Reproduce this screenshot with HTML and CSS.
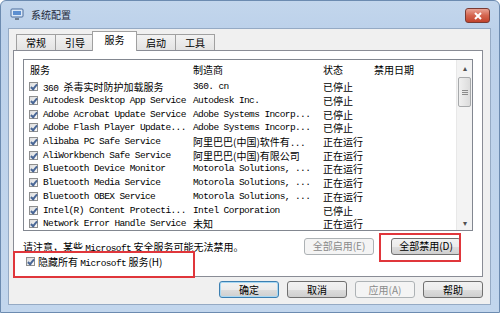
FILE: index.html
```html
<!DOCTYPE html>
<html>
<head>
    <meta charset="utf-8" />
    <title>系统配置</title>
    <link rel="stylesheet" href="styles.css">
</head>
<body>
    <div class="window">
        <div class="titlebar">
            <svg class="app-icon" width="14" height="13" viewBox="0 0 14 13">
                <rect x="1" y="1" width="12" height="8" rx="1" fill="#dbe8f7" stroke="#4b6d9c" />
                <rect x="3" y="3" width="8" height="4" fill="#5d8fd0" />
                <rect x="5" y="10" width="4" height="2" fill="#6f7f93" />
            </svg>
            <span class="title">系统配置</span>
            <div class="close">
                <svg width="10" height="8" viewBox="0 0 10 8">
                    <path d="M2 1 L8 7 M8 1 L2 7" stroke="#fff" stroke-width="2" />
                </svg>
            </div>
        </div>

        <div class="client">
            <div class="tabs">
                <div class="tab">常规</div>
                <div class="tab">引导</div>
                <div class="tab active">服务</div>
                <div class="tab">启动</div>
                <div class="tab">工具</div>
            </div>

            <div class="panel">
                <div class="listview">
                    <div class="list-body">
                        <div class="row head">
                            <span class="c-name">服务</span>
                            <span class="c-maker">制造商</span>
                            <span class="c-state">状态</span>
                            <span class="c-date">禁用日期</span>
                        </div>
                        <div class="rows">
                            <div class="row"><i class="cb"></i><span class="c-name"><b class="mono">360 </b>杀毒实时防护加载服务</span><span class="c-maker mono">360. cn</span><span class="c-state">已停止</span></div>
                            <div class="row"><i class="cb"></i><span class="c-name mono">Autodesk Desktop App Service</span><span class="c-maker mono">Autodesk Inc.</span><span class="c-state">已停止</span></div>
                            <div class="row"><i class="cb"></i><span class="c-name mono">Adobe Acrobat Update Service</span><span class="c-maker mono">Adobe Systems Incorp...</span><span class="c-state">已停止</span></div>
                            <div class="row"><i class="cb"></i><span class="c-name mono">Adobe Flash Player Update...</span><span class="c-maker mono">Adobe Systems Incorp...</span><span class="c-state">已停止</span></div>
                            <div class="row"><i class="cb"></i><span class="c-name mono">Alibaba PC Safe Service</span><span class="c-maker">阿里巴巴(中国)软件有<b class="mono">...</b></span><span class="c-state">正在运行</span></div>
                            <div class="row"><i class="cb"></i><span class="c-name mono">AliWorkbench Safe Service</span><span class="c-maker">阿里巴巴(中国)有限公司</span><span class="c-state">正在运行</span></div>
                            <div class="row"><i class="cb"></i><span class="c-name mono">Bluetooth Device Monitor</span><span class="c-maker mono">Motorola Solutions, ...</span><span class="c-state">正在运行</span></div>
                            <div class="row"><i class="cb"></i><span class="c-name mono">Bluetooth Media Service</span><span class="c-maker mono">Motorola Solutions, ...</span><span class="c-state">正在运行</span></div>
                            <div class="row"><i class="cb"></i><span class="c-name mono">Bluetooth OBEX Service</span><span class="c-maker mono">Motorola Solutions, ...</span><span class="c-state">正在运行</span></div>
                            <div class="row"><i class="cb"></i><span class="c-name mono">Intel(R) Content Protecti...</span><span class="c-maker mono">Intel Corporation</span><span class="c-state">已停止</span></div>
                            <div class="row"><i class="cb"></i><span class="c-name mono">Network Error Handle Service</span><span class="c-maker">未知</span><span class="c-state">正在运行</span></div>
                        </div>
                    </div>
                    <div class="scrollbar">
                        <div class="arrow">&#9652;</div>
                        <div class="track">
                            <div class="thumb"><span></span><span></span><span></span></div>
                        </div>
                        <div class="arrow">&#9662;</div>
                    </div>
                </div>

                <div class="note-row">
                    <span class="note">请注意，某些 <b class="mono">Microsoft</b> 安全服务可能无法禁用。</span>
                    <button class="btn wide" disabled>全部启用(E)</button>
                    <button class="btn wide">全部禁用(D)</button>
                </div>

                <label class="hide-row">
                    <i class="cb"></i>
                    <span>隐藏所有 <b class="mono">Microsoft</b> 服务(H)</span>
                </label>
            </div>

            <div class="footer">
                <button class="btn default">确定</button>
                <button class="btn">取消</button>
                <button class="btn" disabled>应用(A)</button>
                <button class="btn">帮助</button>
            </div>
        </div>

        <!-- 红框标注 -->
        <div class="mark mark-disable"></div>
        <div class="mark mark-hide"></div>
    </div>
</body>
</html>
```

FILE: styles.css
```css
* {
    box-sizing: border-box;
}

body {
    margin: 0;
    font-family: "Noto Sans CJK SC", sans-serif;
    font-size: 10px;
    color: #000;
}

.window {
    position: relative;
    width: 500px;
    height: 313px;
    display: flex;
    flex-direction: column;
    padding: 0 8px 7px 7px;
    background: linear-gradient(#c3d6ec, #bcd1ea 30px, #c2d6ed);
    border: 1px solid #6c8bb0;
    border-radius: 6px 6px 0 0;
}

.titlebar {
    height: 27px;
    display: flex;
    align-items: center;
    gap: 7px;
    padding-left: 2px;
}

.title {
    color: #1e2a3a;
    font-size: 10px;
}

.close {
    margin-left: auto;
    margin-right: 1px;
    margin-top: 2px;
    width: 25px;
    height: 15px;
    border: 1px solid #7a3b33;
    border-radius: 3px;
    background: linear-gradient(#e9a394, #d4654f 50%, #c2432c);
    display: flex;
    align-items: center;
    justify-content: center;
}

.client {
    flex: 1;
    background: #f0f0f0;
    border: 1px solid #95aac4;
    padding: 2px 7px 0 4px;
    display: flex;
    flex-direction: column;
}

.tabs {
    display: flex;
    align-items: flex-end;
    height: 19px;
    padding-left: 3px;
}

.tab {
    width: 40px;
    height: 16px;
    margin-right: -1px;
    border: 1px solid #a0a0a0;
    border-bottom: none;
    background: linear-gradient(#f2f2f2, #e3e3e3);
    text-align: center;
    line-height: 15px;
}

.tab.active {
    width: 45px;
    height: 20px;
    margin: 0 -1px -1px -2px;
    background: #fff;
    position: relative;
    z-index: 1;
    line-height: 16px;
}

.panel {
    height: 227px;
    background: #fff;
    border: 1px solid #898c95;
    padding: 8px 9px 0 9px;
}

.listview {
    height: 172px;
    border: 1px solid #828790;
    display: flex;
}

.list-body {
    flex: 1;
    padding-left: 5px;
}

.row {
    display: flex;
    align-items: center;
    height: 13.7px;
    white-space: nowrap;
}

.row.head {
    height: 19px;
    padding-left: 1px;
}

.row.head .c-name {
    width: 163px;
    padding-left: 0;
}

.rows {
    padding-top: 1px;
}

.mono {
    font-family: "Liberation Mono", monospace;
    font-size: 9.5px;
    letter-spacing: -0.6px;
    font-weight: normal;
}

.c-name {
    width: 155px;
    padding-left: 5px;
}

.c-maker {
    width: 130px;
}

.c-state {
    width: 51px;
}

.cb {
    position: relative;
    display: inline-block;
    width: 9px;
    height: 9px;
    border: 1px solid #8e8f8f;
    background: linear-gradient(135deg, #dcdcdc, #fbfbfb);
    flex: none;
}

.cb::after {
    content: "";
    position: absolute;
    left: 2px;
    top: 0;
    width: 2px;
    height: 5px;
    border: solid #4a6796;
    border-width: 0 2px 2px 0;
    transform: rotate(40deg);
}

.scrollbar {
    width: 16px;
    background: #f3f3f3;
    border-left: 1px solid #e8e8e8;
    display: flex;
    flex-direction: column;
}

.arrow {
    height: 15px;
    text-align: center;
    font-size: 8px;
    line-height: 15px;
    color: #505050;
}

.track {
    flex: 1;
}

.thumb {
    margin: 2px 1px;
    height: 30px;
    border: 1px solid #a7a9ab;
    border-radius: 2px;
    background: linear-gradient(90deg, #f0f0f0, #dcdcdc);
    display: flex;
    flex-direction: column;
    align-items: center;
    justify-content: center;
    gap: 1px;
}

.thumb span {
    width: 6px;
    height: 1px;
    background: #8b8b8b;
}

.note-row {
    display: flex;
    align-items: center;
    height: 26px;
    margin-top: 2px;
}

.note {
    flex: 1;
}

.btn {
    font-family: "Noto Sans CJK SC", sans-serif;
    font-size: 10px;
    height: 17px;
    padding: 0;
    width: 60px;
    border: 1px solid #707070;
    border-radius: 3px;
    background: linear-gradient(#f2f2f2, #ebebeb 50%, #dddddd 51%, #cfcfcf);
    color: #000;
    line-height: 14px;
}

.btn.wide {
    width: 70px;
    margin-left: 17px;
}

.btn.wide:last-child {
    margin-right: 12px;
}

.btn[disabled] {
    border-color: #adb2b5;
    background: #f4f4f4;
    color: #8a8a8a;
}

.btn.default {
    border-color: #3c7fb1;
    box-shadow: inset 0 0 0 1px #a8d8f3;
}

.hide-row {
    display: flex;
    align-items: center;
    gap: 3px;
    height: 18px;
    margin-top: -7px;
    padding-left: 3px;
}

.footer {
    display: flex;
    justify-content: flex-end;
    gap: 8px;
    padding-top: 4px;
}

.mark {
    position: absolute;
    border: 2px solid #e0363b;
}

.mark-disable {
    left: 378px;
    top: 232px;
    width: 82px;
    height: 29px;
}

.mark-hide {
    left: 12px;
    top: 250px;
    width: 182px;
    height: 27px;
}
```
